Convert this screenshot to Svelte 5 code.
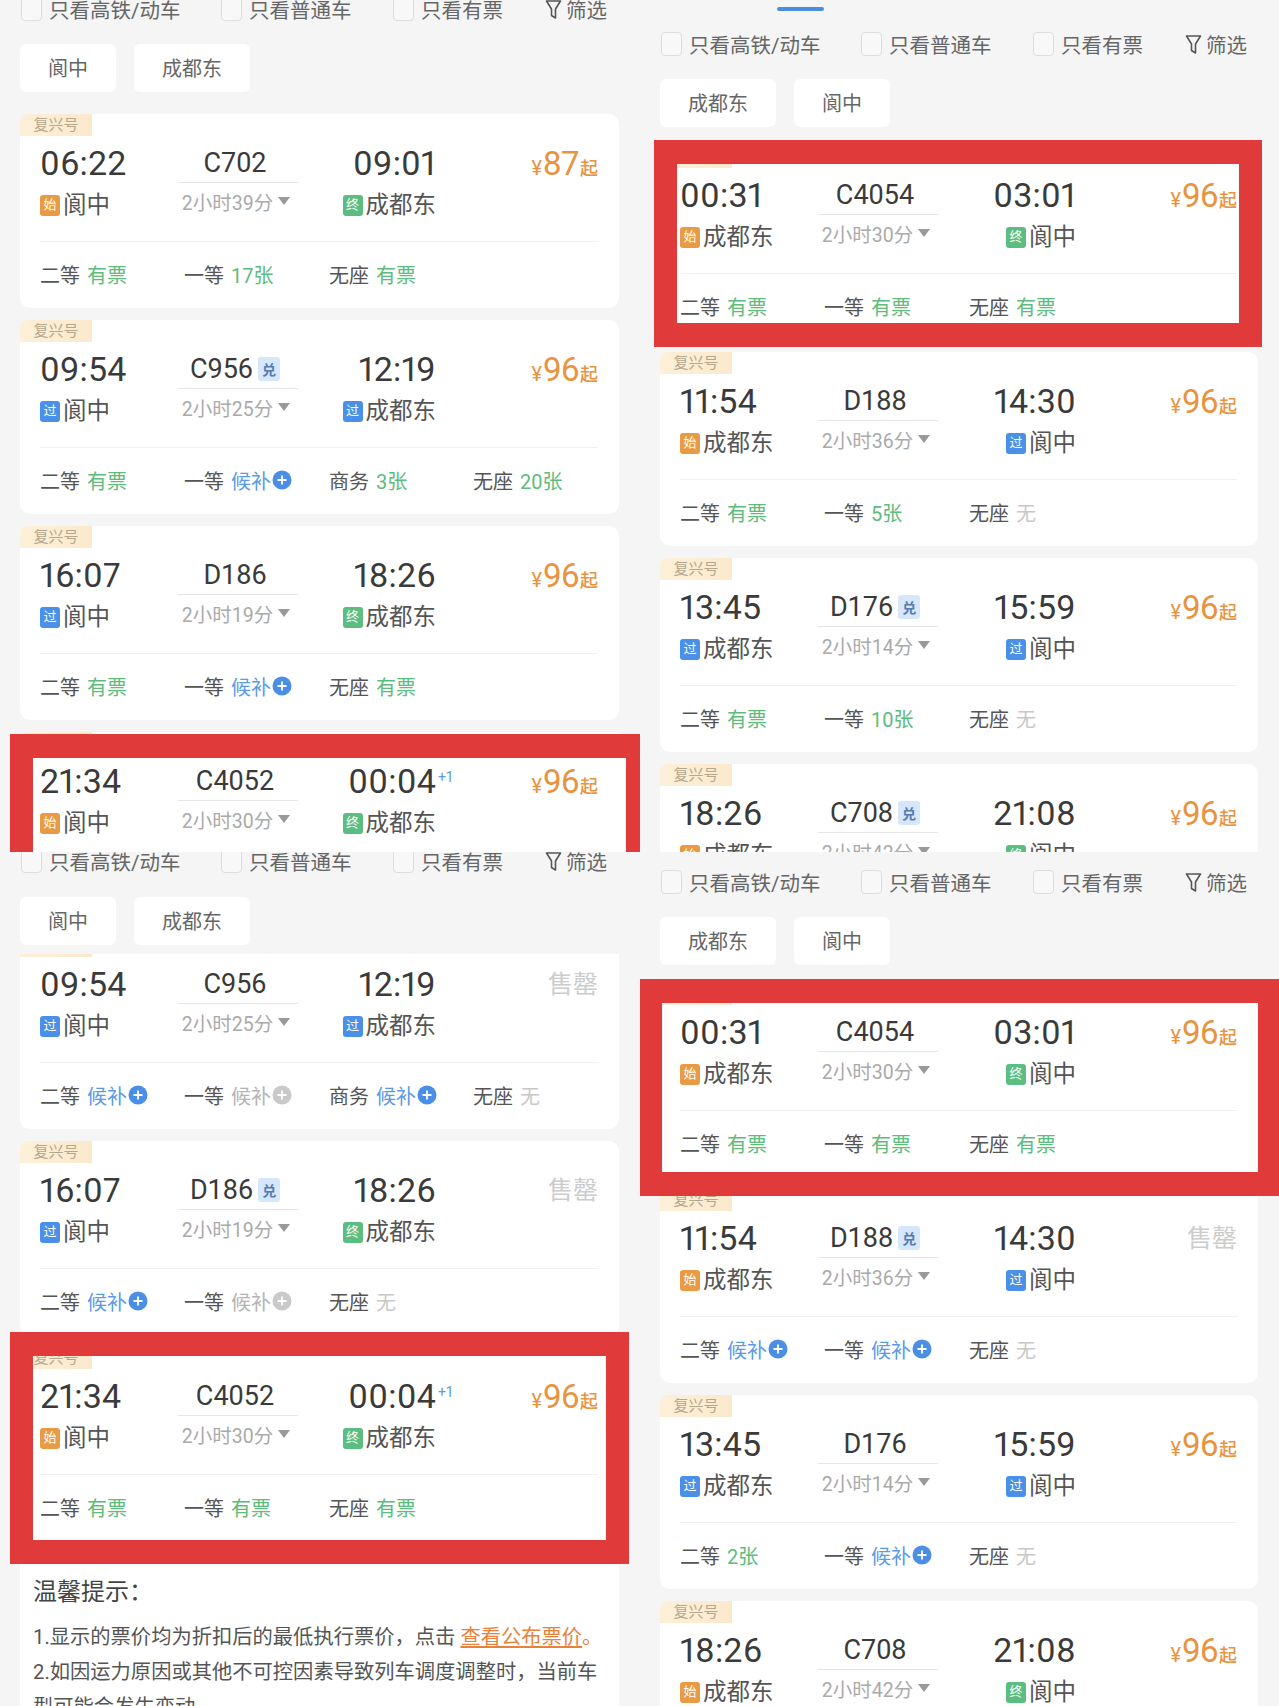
<script>
  const yes = (n) => ({ n, v: '有票', k: 'ok' });
  const num = (n, v) => ({ n, v, k: 'ok' });
  const wait = (n) => ({ n, v: '候补', k: 'wait', plus: true });
  const off = (n) => ({ n, v: '候补', k: 'off', plus: true });
  const none = (n) => ({ n, v: '无', k: 'none' });

  const A = '阆中';
  const B = '成都东';

  const panels = [
    {
      cls: 'p1',
      chips: [A, B],
      cards: [
        { dep: '06:22', train: 'C702', arr: '09:01', dur: '2小时39分', from: A, to: B, ft: '始', tt: '终', price: 87, seats: [yes('二等'), num('一等', '17张'), yes('无座')] },
        { dep: '09:54', train: 'C956', dui: true, arr: '12:19', dur: '2小时25分', from: A, to: B, ft: '过', tt: '过', price: 96, seats: [yes('二等'), wait('一等'), num('商务', '3张'), num('无座', '20张')] },
        { dep: '16:07', train: 'D186', arr: '18:26', dur: '2小时19分', from: A, to: B, ft: '过', tt: '终', price: 96, seats: [yes('二等'), wait('一等'), yes('无座')] },
        { dep: '21:34', train: 'C4052', arr: '00:04', next: true, dur: '2小时30分', from: A, to: B, ft: '始', tt: '终', price: 96, seats: [yes('二等'), yes('一等'), yes('无座')], mark: 'm1' }
      ]
    },
    {
      cls: 'p2',
      tab: true,
      chips: [B, A],
      cards: [
        { dep: '00:31', train: 'C4054', arr: '03:01', dur: '2小时30分', from: B, to: A, ft: '始', tt: '终', price: 96, seats: [yes('二等'), yes('一等'), yes('无座')], mark: 'm2' },
        { dep: '11:54', train: 'D188', arr: '14:30', dur: '2小时36分', from: B, to: A, ft: '始', tt: '过', price: 96, seats: [yes('二等'), num('一等', '5张'), none('无座')] },
        { dep: '13:45', train: 'D176', dui: true, arr: '15:59', dur: '2小时14分', from: B, to: A, ft: '过', tt: '过', price: 96, seats: [yes('二等'), num('一等', '10张'), none('无座')] },
        { dep: '18:26', train: 'C708', dui: true, arr: '21:08', dur: '2小时42分', from: B, to: A, ft: '始', tt: '终', price: 96, seats: [yes('二等'), yes('一等'), none('无座')] }
      ]
    },
    {
      cls: 'p3',
      tips: true,
      chips: [A, B],
      cards: [
        { dep: '09:54', train: 'C956', arr: '12:19', dur: '2小时25分', from: A, to: B, ft: '过', tt: '过', seats: [wait('二等'), off('一等'), wait('商务'), none('无座')] },
        { dep: '16:07', train: 'D186', dui: true, arr: '18:26', dur: '2小时19分', from: A, to: B, ft: '过', tt: '终', seats: [wait('二等'), off('一等'), none('无座')] },
        { dep: '21:34', train: 'C4052', arr: '00:04', next: true, dur: '2小时30分', from: A, to: B, ft: '始', tt: '终', price: 96, seats: [yes('二等'), yes('一等'), yes('无座')], mark: 'm3' }
      ]
    },
    {
      cls: 'p4',
      chips: [B, A],
      cards: [
        { dep: '00:31', train: 'C4054', arr: '03:01', dur: '2小时30分', from: B, to: A, ft: '始', tt: '终', price: 96, seats: [yes('二等'), yes('一等'), yes('无座')], mark: 'm4' },
        { dep: '11:54', train: 'D188', dui: true, arr: '14:30', dur: '2小时36分', from: B, to: A, ft: '始', tt: '过', seats: [wait('二等'), wait('一等'), none('无座')] },
        { dep: '13:45', train: 'D176', arr: '15:59', dur: '2小时14分', from: B, to: A, ft: '过', tt: '过', price: 96, seats: [num('二等', '2张'), wait('一等'), none('无座')] },
        { dep: '18:26', train: 'C708', arr: '21:08', dur: '2小时42分', from: B, to: A, ft: '始', tt: '终', price: 96, seats: [yes('二等'), yes('一等'), none('无座')] }
      ]
    }
  ];

  const filters = ['只看高铁/动车', '只看普通车', '只看有票'];
  const tagClass = { 始: 'start', 终: 'end', 过: 'pass' };
</script>

<div class="page">
  {#each panels as p}
    <section class="panel {p.cls}">
      {#if p.tab}<span class="tabline"></span>{/if}

      <div class="filters">
        {#each filters as f}
          <label class="check"><span class="box"></span>{f}</label>
        {/each}
        <div class="screen">
          <svg width="17" height="21" viewBox="0 0 17 21" fill="none" stroke="#555" stroke-width="1.6" stroke-linejoin="round">
            <path d="M1.5 2h14l-5 8v9l-4-2.5V10z" />
          </svg>
          筛选
        </div>
      </div>

      <div class="chips">
        {#each p.chips as c}<span class="chip">{c}</span>{/each}
      </div>

      <div class="list">
        <div class="scroll">
          {#each p.cards as c}
            <article class="card {c.mark ?? ''}">
              <span class="brand">复兴号</span>

              <div class="route">
                <div class="time">{c.dep}</div>
                <div class="train">
                  <div class="name">
                    {c.train}
                    {#if c.dui}<span class="dui">兑</span>{/if}
                  </div>
                </div>
                <div class="time right">
                  <span class="arr">{c.arr}{#if c.next}<sup class="plus1">+1</sup>{/if}</span>
                </div>
                <div class="price">
                  {#if c.price}
                    <span class="yen">¥</span><span class="amount">{c.price}</span><span class="qi">起</span>
                  {:else}
                    <span class="sold">售罄</span>
                  {/if}
                </div>

                <div class="station">
                  <span class="tag {tagClass[c.ft]}">{c.ft}</span>{c.from}
                </div>
                <div class="dur">{c.dur}<i class="caret"></i></div>
                <div class="station right">
                  <span class="tag {tagClass[c.tt]}">{c.tt}</span>{c.to}
                </div>
              </div>

              <div class="seats">
                {#each c.seats as s}
                  <div class="seat">
                    {s.n}
                    <span class="val {s.k}">{s.v}</span>
                    {#if s.plus}
                      <svg class="plus" width="20" height="20" viewBox="0 0 20 20">
                        <circle cx="10" cy="10" r="9.5" fill={s.k === 'off' ? '#c9c9c9' : '#4a8ee6'} />
                        <path d="M10 5.5v9M5.5 10h9" stroke="#fff" stroke-width="1.8" />
                      </svg>
                    {/if}
                  </div>
                {/each}
              </div>

              {#if c.mark}<span class="redbox"></span>{/if}
            </article>
          {/each}

          {#if p.tips}
            <div class="tips">
              <h3>温馨提示：</h3>
              <p>1.显示的票价均为折扣后的最低执行票价，点击 <a href="#top">查看公布票价</a><span class="dot">。</span></p>
              <p>2.如因运力原因或其他不可控因素导致列车调度调整时，当前车型可能会发生变动。</p>
            </div>
          {/if}
        </div>
      </div>
    </section>
  {/each}
</div>

<style>
  :global(body) {
    margin: 0;
    background: #f5f5f6;
  }

  .page {
    display: grid;
    grid-template-columns: 640px 639px;
    grid-template-rows: 852px 854px;
    width: 1279px;
    height: 1706px;
    overflow: hidden;
    font-family: Roboto, "Noto Sans CJK SC", sans-serif;
    color: #555;
  }

  .panel {
    position: relative;
    overflow: hidden;
    background: #f5f5f6;
  }

  .p1 { --top: -11px; --cm: 15px; --lm: 0px; --gap: 22px; --scroll: 0px; }
  .p2 { --top: 24px; --cm: 15px; --lm: 0px; --gap: 19px; --scroll: 0px; }
  .p3 { --top: -11px; --cm: 16px; --lm: 9px; --gap: 0px; --scroll: -19px; }
  .p4 { --top: 10px; --cm: 15px; --lm: 0px; --gap: 18px; --scroll: 0px; }

  .tabline {
    position: absolute;
    left: 137px;
    top: 7px;
    width: 47px;
    height: 4px;
    border-radius: 2px;
    background: #4a8ee0;
  }

  .filters {
    display: grid;
    grid-template-columns: 200px 172px 152px auto;
    align-items: center;
    height: 40px;
    margin-top: var(--top);
    padding-left: 21px;
    font-size: 20.5px;
    color: #666;
  }

  .check {
    display: flex;
    align-items: center;
    gap: 7px;
  }

  .box {
    width: 19px;
    height: 22px;
    border: 1px solid #ddd;
    border-radius: 4px;
    background: #f8f8f8;
  }

  .screen {
    display: flex;
    align-items: center;
    gap: 4px;
  }

  .chips {
    display: flex;
    gap: 18px;
    margin-top: var(--cm);
    padding-left: 20px;
  }

  .chip {
    display: flex;
    align-items: center;
    box-sizing: border-box;
    padding: 0 28px 2px;
    height: 48px;
    border-radius: 6px;
    background: #fff;
    font-size: 20px;
    color: #666;
  }

  .list {
    overflow: hidden;
    margin-top: var(--lm);
    padding: var(--gap) 21px 0 20px;
  }

  .scroll {
    margin-top: var(--scroll);
    display: flex;
    flex-direction: column;
    gap: 12px;
  }

  .card {
    position: relative;
    flex: none;
    box-sizing: border-box;
    height: 194px;
    padding: 27px 21px 0 20px;
    border-radius: 10px;
    background: #fff;
  }

  .brand {
    position: absolute;
    left: 0;
    top: 0;
    display: flex;
    align-items: center;
    justify-content: center;
    box-sizing: border-box;
    padding-bottom: 4px;
    width: 72px;
    height: 22px;
    border-radius: 8px 0 0 0;
    background: linear-gradient(90deg, #fdf0d8, #fbe9cd);
    font-size: 15px;
    color: #b5a78c;
  }

  .route {
    display: grid;
    grid-template-columns: 138px 120px 138px 1fr;
    grid-template-rows: 44px 38px;
    align-items: center;
  }

  .time {
    font-size: 34px;
    line-height: 44px;
    letter-spacing: 0.2px;
    color: #3a3a3a;
    font-feature-settings: "pnum";
  }

  .right {
    justify-self: end;
  }

  .arr {
    position: relative;
  }

  .plus1 {
    position: absolute;
    left: 100%;
    top: 6px;
    margin-left: 2px;
    font-size: 14px;
    line-height: 20px;
    color: #5a9ae6;
  }

  .train {
    align-self: start;
    box-sizing: border-box;
    height: 42px;
    border-bottom: 1px solid #e6e6e6;
  }

  .name {
    display: flex;
    align-items: center;
    justify-content: center;
    box-sizing: border-box;
    gap: 5px;
    height: 44px;
    padding-right: 6px;
    font-size: 27px;
    color: #3a3a3a;
  }

  .dui {
    display: flex;
    align-items: center;
    justify-content: center;
    width: 22px;
    height: 24px;
    border-radius: 3px;
    background: #d6e6fb;
    font-size: 14px;
    font-weight: 700;
    color: #557bb0;
  }

  .price {
    justify-self: end;
    display: flex;
    align-items: baseline;
    padding-top: 2px;
    color: #e8933f;
  }

  .yen {
    font-size: 20px;
    margin-right: 1px;
  }

  .amount {
    font-size: 33px;
    line-height: 44px;
    letter-spacing: -0.6px;
  }

  .qi {
    font-size: 18px;
    font-weight: 500;
    margin-left: 1px;
  }

  .sold {
    font-size: 25px;
    line-height: 44px;
    color: #ccc;
  }

  .station {
    display: flex;
    align-items: center;
    gap: 3px;
    padding-top: 2px;
    font-size: 23.5px;
    line-height: 36px;
    color: #555;
  }

  .tag {
    display: flex;
    align-items: center;
    justify-content: center;
    width: 20px;
    height: 21px;
    border-radius: 3px;
    font-size: 13px;
    color: #fff;
  }

  .start { background: #e99a45; }
  .end { background: #5bbd80; }
  .pass { background: #4a90e8; }

  .dur {
    display: flex;
    align-items: center;
    justify-content: center;
    box-sizing: border-box;
    gap: 5px;
    margin-top: -6px;
    padding-right: 4px;
    font-size: 19.5px;
    color: #aaa;
  }

  .caret {
    width: 0;
    height: 0;
    border-left: 6px solid transparent;
    border-right: 6px solid transparent;
    border-top: 8px solid #999;
  }

  .seats {
    display: grid;
    grid-template-columns: 144px 145px 144px auto;
    align-items: center;
    height: 64px;
    margin-top: 18px;
    border-top: 1px solid #f1f1f1;
  }

  .seat {
    display: flex;
    align-items: center;
    gap: 7px;
    font-size: 20px;
    color: #555;
  }

  .val { color: #5dbb7c; }
  .val.wait { color: #5a9ae6; }
  .val.off { color: #b4b4b4; }
  .val.none { color: #c8c8c8; }

  .plus {
    margin-left: -6px;
  }

  .redbox {
    position: absolute;
    z-index: 2;
    border: 24px solid #e03a3a;
    border-width: 24px 23px;
  }

  .m1 { box-shadow: 7px 0 0 #fff; }
  .m1 .redbox { left: -10px; right: -21px; top: 2px; bottom: -40px; border-right-width: 14px; }
  .m2 .redbox { left: -6px; right: -4px; top: -6px; bottom: -7px; }
  .m3 .redbox { left: -10px; right: -10px; top: -15px; bottom: -23px; }
  .m4 .redbox { left: -20px; right: -21px; top: -4px; bottom: -19px; border-width: 24px 21px 24px 22px; }

  .tips {
    padding: 21px 6px 0 13px;
    background: #fff;
    color: #555;
  }

  .tips h3 {
    margin: 0 0 10px;
    font-size: 24px;
    font-weight: 400;
    line-height: 36px;
    color: #444;
  }

  .tips p {
    margin: 0;
    font-size: 20.3px;
    line-height: 35px;
  }

  .tips a {
    color: #e8823a;
  }

  .dot {
    color: #e8823a;
  }
</style>
